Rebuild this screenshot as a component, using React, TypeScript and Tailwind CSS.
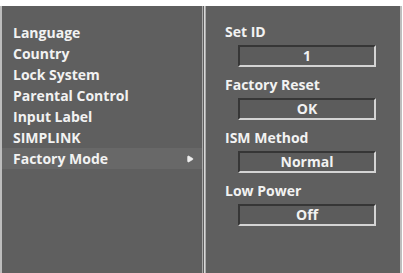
import { Play } from 'lucide-react'

const menu = ['Language', 'Country', 'Lock System', 'Parental Control', 'Input Label', 'SIMPLINK', 'Factory Mode']

const options = [
  { label: 'Set ID', value: '1' },
  { label: 'Factory Reset', value: 'OK' },
  { label: 'ISM Method', value: 'Normal' },
  { label: 'Low Power', value: 'Off' },
]

const App = () => {
  return (
    <div
      className="w-[403px] h-[273px] bg-white pt-[6px] overflow-hidden text-[#f2f2f2] text-[14px] font-bold"
      style={{ fontFamily: '"Open Sans", "Liberation Sans", sans-serif' }}
    >
      <div className="flex h-[267px] w-[402px] bg-[#5f5f5f] border-l-2 border-r-2 border-[#bdbdbd]">
        {/* left menu */}
        <div className="w-[200px] flex flex-col pt-[17px]">
          {menu.map((item) => {
            const active = item === 'Factory Mode'
            return (
              <div
                key={item}
                className={`h-[20.9px] flex items-center justify-between pl-[11px] pr-[8px] leading-none ${
                  active ? 'bg-[#686868]' : ''
                }`}
              >
                <span>{item}</span>
                {active && <Play className="w-[8px] h-[8px] fill-[#eeeeee] text-[#eeeeee]" />}
              </div>
            )
          })}
        </div>

        {/* divider */}
        <div className="w-[4px] bg-[#5f5f5f] border-l border-r border-[#aaaaaa] flex justify-center">
          <div className="w-[1px] bg-[#d8d8d8]" />
        </div>

        {/* right options */}
        <div className="flex-1 flex flex-col pt-[16px] pl-[19px]">
          {options.map((o) => (
            <div key={o.label} className="flex flex-col mb-[8px]">
              <div className="h-[20px] flex items-center leading-none">{o.label}</div>
              <div className="ml-[13px] mt-[3px] w-[138px] h-[22px] flex items-center justify-center border-t-2 border-l-2 border-[#363636] border-b-2 border-r-2 border-b-[#d4d4d4] border-r-[#d4d4d4] bg-[#5c5c5c] leading-none">
                {o.value}
              </div>
            </div>
          ))}
        </div>
      </div>
    </div>
  )
}

export default App
